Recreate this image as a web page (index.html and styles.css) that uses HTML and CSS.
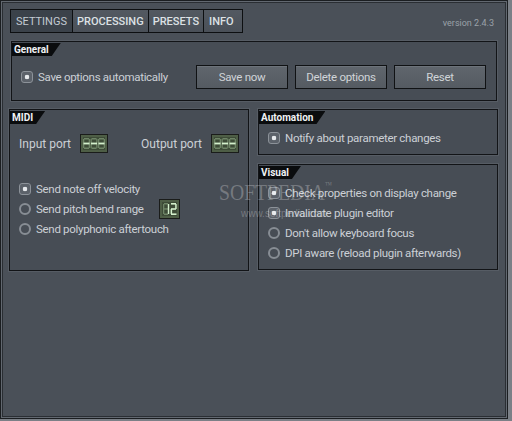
FILE: index.html
```html
<!DOCTYPE html>
<html>
<head>
<meta charset="utf-8">
<link rel="stylesheet" href="styles.css">
</head>
<body>
<div class="window">
  <div class="topbar">
    <div class="tabs">
      <div class="tab active">SETTINGS</div>
      <div class="tab">PROCESSING</div>
      <div class="tab">PRESETS</div>
      <div class="tab last">INFO</div>
    </div>
    <div class="version">version 2.4.3</div>
  </div>

  <div class="group general">
    <div class="glabel">General</div>
    <div class="general-row">
      <label class="opt"><span class="radio on"></span>Save options automatically</label>
      <div class="buttons">
        <div class="btn">Save now</div>
        <div class="btn">Delete options</div>
        <div class="btn">Reset</div>
      </div>
    </div>
  </div>

  <div class="columns">
    <div class="group midi">
      <div class="glabel">MIDI</div>
      <div class="ports">
        <div class="port"><span>Input port</span>
          <span class="led">
            <svg width="22" height="11" viewBox="0 0 22 11">
              <g fill="#6e8466">
                <rect x="1" y="0" width="5" height="1.5"/><rect x="1" y="9.5" width="5" height="1.5"/>
                <rect x="0" y="1" width="1.3" height="9"/><rect x="5.7" y="1" width="1.3" height="9"/>
                <rect x="8.5" y="0" width="5" height="1.5"/><rect x="8.5" y="9.5" width="5" height="1.5"/>
                <rect x="7.5" y="1" width="1.3" height="9"/><rect x="13.2" y="1" width="1.3" height="9"/>
                <rect x="16" y="0" width="5" height="1.5"/><rect x="16" y="9.5" width="5" height="1.5"/>
                <rect x="15" y="1" width="1.3" height="9"/><rect x="20.7" y="1" width="1.3" height="9"/>
              </g>
              <g fill="#d4f0cc">
                <rect x="0.5" y="4.6" width="6" height="1.8"/>
                <rect x="8" y="4.6" width="6" height="1.8"/>
                <rect x="15.5" y="4.6" width="6" height="1.8"/>
              </g>
            </svg>
          </span>
        </div>
        <div class="port"><span>Output port</span>
          <span class="led">
            <svg width="22" height="11" viewBox="0 0 22 11">
              <g fill="#6e8466">
                <rect x="1" y="0" width="5" height="1.5"/><rect x="1" y="9.5" width="5" height="1.5"/>
                <rect x="0" y="1" width="1.3" height="9"/><rect x="5.7" y="1" width="1.3" height="9"/>
                <rect x="8.5" y="0" width="5" height="1.5"/><rect x="8.5" y="9.5" width="5" height="1.5"/>
                <rect x="7.5" y="1" width="1.3" height="9"/><rect x="13.2" y="1" width="1.3" height="9"/>
                <rect x="16" y="0" width="5" height="1.5"/><rect x="16" y="9.5" width="5" height="1.5"/>
                <rect x="15" y="1" width="1.3" height="9"/><rect x="20.7" y="1" width="1.3" height="9"/>
              </g>
              <g fill="#d4f0cc">
                <rect x="0.5" y="4.6" width="6" height="1.8"/>
                <rect x="8" y="4.6" width="6" height="1.8"/>
                <rect x="15.5" y="4.6" width="6" height="1.8"/>
              </g>
            </svg>
          </span>
        </div>
      </div>
      <div class="opts midi-opts">
        <label class="opt"><span class="radio on"></span>Send note off velocity</label>
        <div class="opt-row">
          <label class="opt"><span class="radio"></span>Send pitch bend range</label>
          <span class="led small">
            <svg width="14" height="12" viewBox="0 0 14 12">
              <g fill="#6e8466">
                <rect x="1" y="0" width="4" height="1.5"/><rect x="1" y="10.5" width="4" height="1.5"/>
                <rect x="0" y="1" width="1.3" height="10"/><rect x="1" y="5.2" width="4" height="1.5"/>
              </g>
              <g fill="#d4f0cc">
                <rect x="4.8" y="1" width="1.4" height="10"/>
                <rect x="8" y="0" width="5" height="1.6"/>
                <rect x="12.2" y="1" width="1.5" height="5"/>
                <rect x="8" y="5.2" width="5" height="1.6"/>
                <rect x="7.6" y="6" width="1.5" height="5"/>
                <rect x="8" y="10.4" width="5.5" height="1.6"/>
              </g>
            </svg>
          </span>
        </div>
        <label class="opt"><span class="radio"></span>Send polyphonic aftertouch</label>
      </div>
    </div>

    <div class="rightcol">
      <div class="group automation">
        <div class="glabel">Automation</div>
        <div class="opts auto-opts">
          <label class="opt"><span class="radio on"></span>Notify about parameter changes</label>
        </div>
      </div>
      <div class="group visual">
        <div class="glabel">Visual</div>
        <div class="opts visual-opts">
          <label class="opt"><span class="radio on"></span>Check properties on display change</label>
          <label class="opt"><span class="radio on"></span>Invalidate plugin editor</label>
          <label class="opt"><span class="radio"></span>Don't allow keyboard focus</label>
          <label class="opt"><span class="radio"></span>DPI aware (reload plugin afterwards)</label>
        </div>
      </div>
    </div>
  </div>

  <div class="watermark">
    <div class="wm-big">SOFTPEDIA<span class="tm">™</span></div>
    <div class="wm-small">www.softpedia.com</div>
  </div>
</div>
</body>
</html>
```

FILE: styles.css
```css
html, body {
  margin: 0;
  padding: 0;
}
body {
  width: 512px;
  height: 421px;
  background: #7b8087;
  font-family: Roboto, "Noto Sans", sans-serif;
  font-size: 11.5px;
  letter-spacing: -0.3px;
  color: #ccd0d5;
  overflow: hidden;
}
.window {
  position: relative;
  box-sizing: border-box;
  width: 508px;
  height: 419px;
  background: #4a5058;
  border: 1px solid #1b1e21;
  box-shadow: inset 0 0 0 1px #626870, inset 0 0 0 2px #2a2e33;
  padding: 8px 10px 0 8px;
}
.topbar {
  display: flex;
  justify-content: space-between;
  align-items: center;
  height: 24px;
  padding-left: 1px;
}
.tabs {
  display: flex;
  border: 1px solid #0d0f11;
  background: #0d0f11;
  gap: 1px;
  height: 22px;
}
.tab {
  display: flex;
  align-items: center;
  padding: 0 4px;
  background: linear-gradient(#535961, #4a5058);
  color: #dde1e5;
  font-weight: 500;
  font-size: 11px;
  letter-spacing: 0;
}
.tab.active {
  background: #3b424a;
  color: #c3cbd3;
  font-weight: 400;
  padding: 0 5px;
}
.tab.last {
  padding: 0 8px 0 5px;
}
.version {
  font-size: 9px;
  letter-spacing: 0;
  color: #9aa1a9;
  margin-top: 4px;
  margin-right: 3px;
}
.group {
  position: relative;
  border: 1px solid #121417;
  box-shadow: 0 0 0 1px #565c64;
  background: #474d55;
}
.glabel {
  display: inline-block;
  background: #0a0c0e;
  color: #f0f2f4;
  font-weight: 700;
  font-size: 10px;
  letter-spacing: 0;
  line-height: 13px;
  height: 13px;
  padding: 0 12px 0 2px;
  clip-path: polygon(0 0, 100% 0, calc(100% - 9px) 100%, 0 100%);
}
.general {
  margin-top: 8px;
  margin-left: 2px;
  height: 58px;
}
.general-row {
  display: flex;
  align-items: center;
  justify-content: space-between;
  padding: 9px 10px 0 9px;
}
.buttons {
  display: flex;
  gap: 7px;
}
.btn {
  box-sizing: border-box;
  width: 92px;
  height: 24px;
  display: flex;
  align-items: center;
  justify-content: center;
  border: 1px solid #101214;
  background: linear-gradient(#60666d, #555b62);
  box-shadow: inset 0 1px 0 #6d737a;
  color: #d0d4d8;
  font-size: 11.5px;
}
.opt {
  display: flex;
  align-items: center;
  gap: 5px;
  height: 20px;
  white-space: nowrap;
}
.radio {
  box-sizing: border-box;
  width: 12px;
  height: 12px;
  border: 2px solid #878d94;
  border-radius: 50%;
  flex: none;
}
.radio.on {
  border: 1px solid #8c9299;
  border-radius: 3px;
  background: radial-gradient(circle, #e6e9ec 0 2px, #5c626a 2.6px);
}
.columns {
  display: grid;
  grid-template-columns: 240px 240px;
  gap: 9px;
  margin-top: 8px;
}
.midi {
  height: 160px;
}
.ports {
  display: flex;
  justify-content: space-between;
  padding: 10px 9px 0 9px;
  font-size: 12px;
  letter-spacing: 0;
}
.port {
  display: flex;
  align-items: center;
  gap: 9px;
}
.led {
  box-sizing: border-box;
  display: flex;
  align-items: center;
  justify-content: center;
  width: 28px;
  height: 19px;
  border: 1px solid #1a1c1a;
  background: #3d4b37;
  box-shadow: inset 0 0 0 2px #4e5e46;
}
.led.small {
  width: 21px;
  height: 20px;
}
.midi-opts {
  padding: 26px 0 0 9px;
}
.opt-row {
  display: flex;
  align-items: center;
}
.opt-row .opt {
  width: 140px;
}
.rightcol {
  display: flex;
  flex-direction: column;
  gap: 9px;
}
.automation {
  height: 44px;
}
.auto-opts {
  padding: 4px 0 0 9px;
}
.visual {
  height: 104px;
}
.visual-opts {
  padding: 4px 0 0 9px;
}
.watermark {
  position: absolute;
  left: 218px;
  top: 178px;
  color: rgba(255, 255, 255, 0.26);
  letter-spacing: 0;
  pointer-events: none;
}
.wm-big {
  font-family: "Liberation Serif", serif;
  font-size: 24px;
  line-height: 26px;
  transform: scaleX(0.82);
  transform-origin: left center;
}
.tm {
  font-size: 9px;
  vertical-align: top;
  line-height: 12px;
}
.wm-small {
  font-family: "Liberation Sans", sans-serif;
  font-size: 10px;
  margin-left: 22px;
  margin-top: 3px;
}
```
